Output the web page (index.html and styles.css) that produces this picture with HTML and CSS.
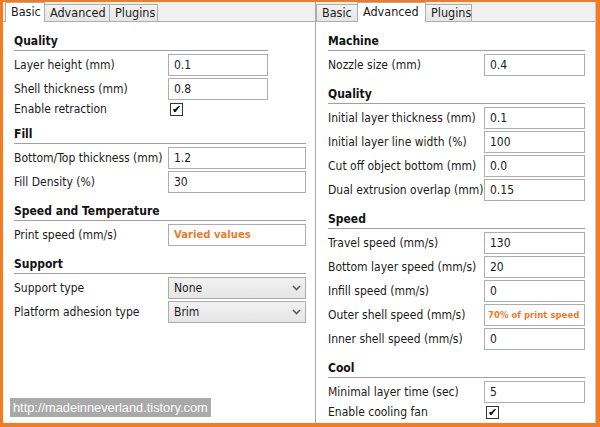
FILE: index.html
```html
<!DOCTYPE html>
<html>
<head>
<meta charset="utf-8">
<link rel="stylesheet" href="styles.css">
</head>
<body>
<div class="frame">
  <div class="panel panel-left">
    <div class="tabs">
      <div class="tab active">Basic</div>
      <div class="tab">Advanced</div>
      <div class="tab">Plugins</div>
    </div>
    <div class="body">
      <div class="section narrow">
        <div class="heading">Quality</div>
        <div class="row"><span class="label">Layer height (mm)</span><span class="input">0.1</span></div>
        <div class="row"><span class="label">Shell thickness (mm)</span><span class="input">0.8</span></div>
        <div class="row check-row"><span class="label">Enable retraction</span><span class="checkbox">&#10004;</span></div>
      </div>
      <div class="section">
        <div class="heading">Fill</div>
        <div class="row"><span class="label">Bottom/Top thickness (mm)</span><span class="input">1.2</span></div>
        <div class="row"><span class="label">Fill Density (%)</span><span class="input">30</span></div>
      </div>
      <div class="section">
        <div class="heading">Speed and Temperature</div>
        <div class="row"><span class="label">Print speed (mm/s)</span><span class="input varied">Varied values</span></div>
      </div>
      <div class="section">
        <div class="heading">Support</div>
        <div class="row"><span class="label">Support type</span><span class="select">None<svg class="chev" width="9" height="6" viewBox="0 0 9 6"><path d="M1 1 L4.5 4.5 L8 1" fill="none" stroke="#5a5a5a" stroke-width="1.6"/></svg></span></div>
        <div class="row"><span class="label">Platform adhesion type</span><span class="select">Brim<svg class="chev" width="9" height="6" viewBox="0 0 9 6"><path d="M1 1 L4.5 4.5 L8 1" fill="none" stroke="#5a5a5a" stroke-width="1.6"/></svg></span></div>
      </div>
    </div>
    <div class="watermark">http://madeinneverland.tistory.com</div>
  </div>
  <div class="panel panel-right">
    <div class="tabs">
      <div class="tab">Basic</div>
      <div class="tab active">Advanced</div>
      <div class="tab">Plugins</div>
    </div>
    <div class="body">
      <div class="section">
        <div class="heading">Machine</div>
        <div class="row"><span class="label">Nozzle size (mm)</span><span class="input">0.4</span></div>
      </div>
      <div class="section">
        <div class="heading">Quality</div>
        <div class="row"><span class="label">Initial layer thickness (mm)</span><span class="input">0.1</span></div>
        <div class="row"><span class="label">Initial layer line width (%)</span><span class="input">100</span></div>
        <div class="row"><span class="label">Cut off object bottom (mm)</span><span class="input">0.0</span></div>
        <div class="row"><span class="label">Dual extrusion overlap (mm)</span><span class="input">0.15</span></div>
      </div>
      <div class="section">
        <div class="heading">Speed</div>
        <div class="row"><span class="label">Travel speed (mm/s)</span><span class="input">130</span></div>
        <div class="row"><span class="label">Bottom layer speed (mm/s)</span><span class="input">20</span></div>
        <div class="row"><span class="label">Infill speed (mm/s)</span><span class="input">0</span></div>
        <div class="row"><span class="label">Outer shell speed (mm/s)</span><span class="input varied small">70% of print speed</span></div>
        <div class="row"><span class="label">Inner shell speed (mm/s)</span><span class="input">0</span></div>
      </div>
      <div class="section">
        <div class="heading">Cool</div>
        <div class="row"><span class="label">Minimal layer time (sec)</span><span class="input">5</span></div>
        <div class="row check-row"><span class="label">Enable cooling fan</span><span class="checkbox">&#10004;</span></div>
      </div>
    </div>
  </div>
</div>
</body>
</html>
```
FILE: styles.css
```css
html, body {
  margin: 0;
  padding: 0;
}
body {
  background: #f47b20;
  width: 600px;
  height: 427px;
  overflow: hidden;
  font-family: "DejaVu Sans Condensed", "DejaVu Sans", Verdana, sans-serif;
  font-size: 12px;
  color: #1a1a1a;
}
.frame {
  display: flex;
  margin: 2px 4px 0 3px;
  height: 421px;
  background: #fff;
}
.panel {
  position: relative;
  display: flex;
  flex-direction: column;
  background: #fff;
}
.panel-left {
  width: 312px;
  border-right: 1px solid #a9a9a9;
}
.panel-right {
  width: 279px;
  border-right: 1px solid #c8c8c8;
}
.tabs {
  display: flex;
  align-items: flex-end;
  height: 19px;
  background: #f0f0f0;
  border-bottom: 1px solid #adadad;
  padding-left: 2px;
  font-size: 12.5px;
}
.panel-right .tabs {
  padding-left: 0;
}
.tab {
  height: 16px;
  line-height: 16px;
  padding: 0 5px;
  border: 1px solid #adadad;
  border-bottom: none;
  margin-right: -1px;
  background: linear-gradient(#f2f2f2, #e6e6e6);
  color: #1a1a1a;
  white-space: nowrap;
}
.tab.active {
  height: 19px;
  line-height: 17px;
  background: #fff;
  margin-bottom: -1px;
  position: relative;
  z-index: 1;
}
.panel-left .tab.active { width: 28px; }
.panel-left .tab:nth-child(2) { width: 54px; }
.panel-left .tab:nth-child(3) { width: 37px; }
.panel-right .tab:nth-child(1) { width: 30px; }
.panel-right .tab.active { width: 57px; }
.panel-right .tab:nth-child(3) { width: 35px; }
.body {
  padding: 11px 0 0 11px;
}
.panel-right .body {
  padding-left: 12px;
}
.section {
  width: 292px;
  margin-bottom: 10px;
}
.section.narrow {
  width: 254px;
}
.panel-right .section {
  width: 257px;
}
.heading {
  height: 17px;
  line-height: 16px;
  font-weight: bold;
  font-size: 12px;
  border-bottom: 1px solid #a0a0a0;
  margin-bottom: 3px;
  color: #111;
}
.row {
  display: grid;
  grid-template-columns: 154px 1fr;
  align-items: center;
  height: 22px;
  margin-bottom: 2px;
}
.panel-right .row {
  grid-template-columns: 156px 1fr;
}
.row.check-row {
  height: 14px;
  margin-bottom: 0;
}
.label {
  white-space: nowrap;
}
.input {
  box-sizing: border-box;
  height: 22px;
  line-height: 20px;
  border: 1px solid #abadb3;
  padding-left: 5px;
  background: #fff;
  white-space: nowrap;
  overflow: hidden;
}
.input.varied {
  color: #f07a2a;
  font-weight: bold;
  font-size: 11.2px;
}
.input.small {
  font-size: 9.5px;
  padding-left: 3px;
}
.select {
  box-sizing: border-box;
  height: 22px;
  line-height: 20px;
  border: 1px solid #acacac;
  padding-left: 5px;
  background: linear-gradient(#f2f2f2, #e5e5e5);
  display: flex;
  justify-content: space-between;
  align-items: center;
  padding-right: 4px;
}
.chev {
  display: block;
}
.checkbox {
  box-sizing: border-box;
  width: 13px;
  height: 13px;
  margin-left: 2px;
  border: 1px solid #333;
  background: #fff;
  font-family: "DejaVu Sans", sans-serif;
  font-size: 11px;
  line-height: 11px;
  text-align: center;
  color: #000;
}
.watermark {
  position: absolute;
  left: 7px;
  top: 396px;
  width: 201px;
  height: 19px;
  line-height: 19px;
  background: #a9a9a9;
  color: #fff;
  font-family: "Liberation Sans", Arial, sans-serif;
  font-size: 12.8px;
  padding-left: 3px;
  box-sizing: border-box;
}
```
